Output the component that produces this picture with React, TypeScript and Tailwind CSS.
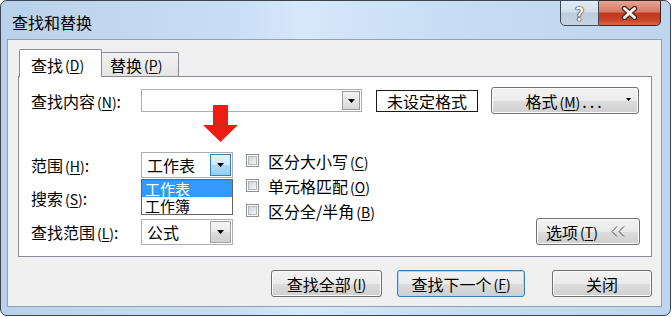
import React from "react";

function Mn({ c }: { c: string }) {
  return (
    <span className="ml-[2px] text-[14px]">
      (<span className="underline underline-offset-[2px] decoration-[1px]">{c}</span>)
    </span>
  );
}

function ArrowBox({ hover, w }: { hover?: boolean; w: string }) {
  return (
    <div
      className={
        hover
          ? "w-[21px] h-full flex items-center justify-center border border-[#3c7fb1] bg-[linear-gradient(to_bottom,#e3f3fc_0%,#cdeafb_50%,#acdcf7_50%,#93cff1_100%)]"
          : w === "s"
          ? "w-[18px] h-full flex items-center justify-center border border-[#9a9a9a] bg-[linear-gradient(to_bottom,#f4f4f4,#d8d8d8)]"
          : "w-[21px] h-full flex items-center justify-center border border-[#a4a4a4] bg-[linear-gradient(to_bottom,#f4f4f4_0%,#ebebeb_50%,#dddddd_50%,#cfcfcf_100%)]"
      }
    >
      <svg width="7" height="4" viewBox="0 0 7 4">
        <path d="M0 0h7L3.5 4z" fill="#000" />
      </svg>
    </div>
  );
}

function Combo({ text, hover }: { text: string; hover?: boolean }) {
  return (
    <div className="w-[92px] h-[26px] border border-[#abadb3] bg-white flex items-stretch p-[1px]">
      <div className="flex-1 flex items-center pl-[4px] text-[16px] leading-none">{text}</div>
      <ArrowBox hover={hover} w="n" />
    </div>
  );
}

function Check({ children }: { children: React.ReactNode }) {
  return (
    <div className="flex items-center h-[13px] mb-[12px]">
      <div className="w-[13px] h-[13px] border border-[#8e8f8f] bg-white p-[1px]">
        <div className="w-full h-full border border-[#b4b8bd] bg-[linear-gradient(135deg,#cfd3d8,#f4f4f4)]" />
      </div>
      <span className="ml-[9px] text-[16px] leading-none whitespace-nowrap">{children}</span>
    </div>
  );
}

const btn =
  "h-[27px] rounded-[3px] border border-[#707070] bg-[linear-gradient(to_bottom,#f2f2f2_0%,#ebebeb_50%,#dddddd_50%,#cfcfcf_100%)] shadow-[inset_0_0_0_1px_#fbfbfb] flex items-center justify-center text-[16px] leading-none";

export default function App() {
  return (
    <div className="relative w-[672px] h-[317px] bg-white overflow-hidden font-['Noto_Sans_CJK_SC','Noto_Sans_CJK_JP',sans-serif] text-black">
      <div className="w-[671px] h-[316px] rounded-[7px] border border-[#3b4550] bg-[linear-gradient(to_right,#b9d1ea_0%,#c9def4_35%,#d6e8fa_45%,#c6dcf2_70%,#bed5ed_100%)] flex flex-col pl-[6px] pr-[8px] pb-[8px]">
        {/* title bar */}
        <div className="h-[38px] flex items-start justify-between">
          <div className="ml-[5px] mt-[13px] text-[16px] leading-none">查找和替换</div>
          <div className="flex -mt-[1px] mr-[1px]">
            <div className="w-[39px] h-[26px] border border-[#3d4a58] rounded-bl-[5px] bg-[linear-gradient(to_bottom,#e3ebf4_0%,#d3dfec_45%,#bccbdc_50%,#c4d4e6_100%)] flex items-center justify-center">
              <span className="text-[18px] font-bold leading-none text-[#f4f4f4] [text-shadow:0_0_1px_#222,0_0_1px_#222,0_0_1px_#222]">?</span>
            </div>
            <div className="w-[62px] h-[26px] border border-l-0 border-[#3a2622] rounded-br-[5px] bg-[linear-gradient(to_bottom,#e6a696_0%,#d67a64_45%,#c3391f_52%,#c84529_80%,#d9684c_100%)] flex items-center justify-center">
              <svg width="17" height="14" viewBox="0 0 17 14">
                <path d="M3.5 2.5 L13.5 11.5 M13.5 2.5 L3.5 11.5" stroke="#4a2620" strokeWidth="5.5" strokeLinecap="round" />
                <path d="M3.5 2.5 L13.5 11.5 M13.5 2.5 L3.5 11.5" stroke="#f2f2f2" strokeWidth="3" strokeLinecap="round" />
              </svg>
            </div>
          </div>
        </div>

        {/* client area */}
        <div className="flex-1 bg-[#f0f0f0] border border-[#8da2b8] flex flex-col pt-[9px] pl-[10px] pr-[9px]">
          {/* tabs */}
          <div className="flex items-end h-[28px] -mb-[1px] relative z-10">
            <div className="ml-[1px] w-[83px] h-[28px] border border-b-0 border-[#898c95] bg-white rounded-t-[2px] flex items-center pl-[11px] pt-[2px] text-[16px] leading-none">
              查找<Mn c="D" />
            </div>
            <div className="w-[77px] h-[24px] mb-[1px] border border-l-0 border-b-0 border-[#898c95] rounded-tr-[2px] bg-[linear-gradient(to_bottom,#f3f3f3,#e4e4e4)] flex items-center pl-[8px] pt-[1px] text-[16px] leading-none">
              替换<Mn c="P" />
            </div>
          </div>

          {/* panel */}
          <div className="h-[181px] border border-[#898c95] bg-white pt-[12px] pl-[12px] flex flex-col">
            <div className="flex items-center h-[23px]">
              <div className="w-[110px] text-[16px] leading-none whitespace-nowrap">
                查找内容<Mn c="N" />:
              </div>
              <div className="w-[221px] h-[23px] border border-[#abadb3] bg-white flex justify-end p-[1px]">
                <ArrowBox w="s" />
              </div>
              <div className="ml-[14px] w-[102px] h-[22px] border border-[#1a1a1a] bg-white flex items-center justify-center text-[16px] leading-none">
                未设定格式
              </div>
              <div className={btn + " ml-[13px] w-[148px] h-[23px] relative"}>
                <span>
                  格式<Mn c="M" />
                  <span className="ml-[2px] tracking-[3px]">...</span>
                </span>
                <svg className="absolute right-[7px] top-[10px]" width="5" height="3" viewBox="0 0 5 3">
                  <path d="M0 0h5L2.5 3z" fill="#000" />
                </svg>
              </div>
            </div>

            <div className="mt-[40px] flex">
              {/* left column */}
              <div className="relative flex flex-col">
                <div className="flex items-center h-[26px]">
                  <div className="w-[110px] text-[16px] leading-none whitespace-nowrap">
                    范围<Mn c="H" />:
                  </div>
                  <Combo text="工作表" hover />
                </div>
                <div className="flex items-center h-[26px] mt-[7px]">
                  <div className="w-[110px] text-[16px] leading-none whitespace-nowrap">
                    搜索<Mn c="S" />:
                  </div>
                  <Combo text="" />
                </div>
                <div className="flex items-center h-[26px] mt-[8px]">
                  <div className="w-[110px] text-[16px] leading-none whitespace-nowrap">
                    查找范围<Mn c="L" />:
                  </div>
                  <Combo text="公式" />
                </div>
                {/* dropdown list */}
                <div className="absolute left-[110px] top-[27px] w-[92px] h-[36px] border border-[#646464] bg-white flex flex-col">
                  <div className="h-[17px] bg-[#3399ff] text-white text-[15px] leading-[17px] pl-[3px]">工作表</div>
                  <div className="h-[17px] text-[15px] leading-[17px] pl-[3px]">工作簿</div>
                </div>
              </div>

              {/* checkbox column */}
              <div className="ml-[13px] pt-[2px] flex flex-col">
                <Check>
                  区分大小写<Mn c="C" />
                </Check>
                <Check>
                  单元格匹配<Mn c="O" />
                </Check>
                <Check>
                  区分全/半角<Mn c="B" />
                </Check>
              </div>

              <div className={btn + " ml-auto mr-[11px] self-end w-[104px] justify-start pl-[9px]"}>
                选项<Mn c="T" />
                <svg className="ml-[13px]" width="14" height="11" viewBox="0 0 14 11">
                  <path d="M6 0.5 L1 5.5 L6 10.5 M13 0.5 L8 5.5 L13 10.5" stroke="#4a4a4a" strokeWidth="1" fill="none" />
                </svg>
              </div>
            </div>
          </div>

          {/* bottom buttons */}
          <div className="mt-[13px] flex justify-end">
            <div className={btn + " w-[111px]"}>
              查找全部<Mn c="I" />
            </div>
            <div className="ml-[15px] w-[128px] h-[27px] rounded-[3px] border border-[#3c7fb1] bg-[linear-gradient(to_bottom,#f2f2f2_0%,#ebebeb_50%,#dddddd_50%,#cfcfcf_100%)] shadow-[inset_0_0_0_1px_#a8dbf7] flex items-center justify-center text-[16px] leading-none">
              查找下一个<Mn c="F" />
            </div>
            <div className={btn + " ml-[27px] w-[100px]"}>关闭</div>
          </div>
        </div>
      </div>

      {/* red arrow annotation */}
      <svg className="absolute left-[202px] top-[105px]" width="37" height="38" viewBox="0 0 37 38">
        <path d="M11 0 H26 V20 H36 L18.5 37 L1 20 H11 Z" fill="#ee1c14" />
      </svg>
    </div>
  );
}
